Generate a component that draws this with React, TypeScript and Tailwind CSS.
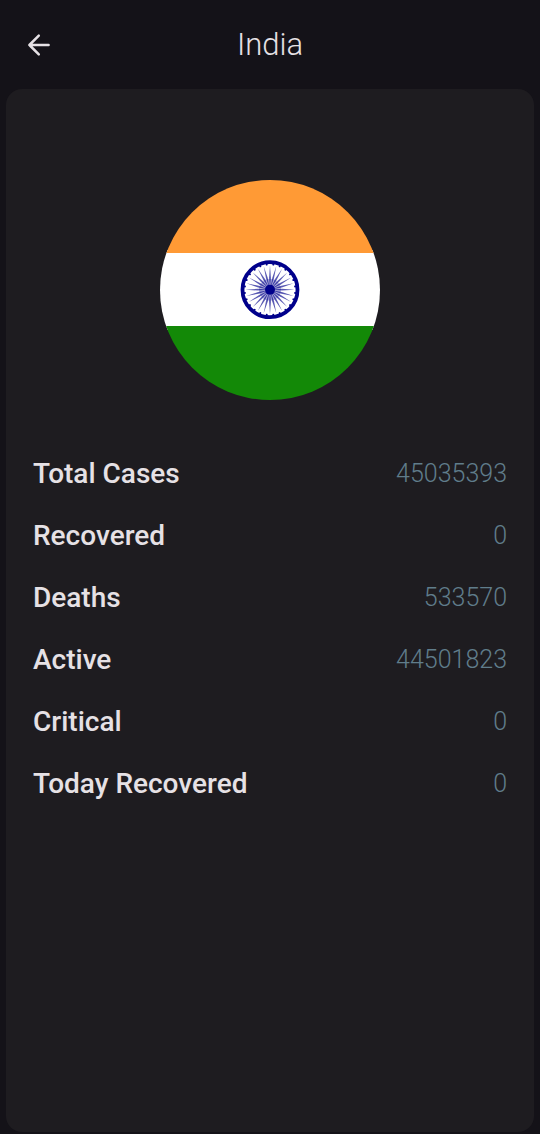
const stats = [
  { label: "Total Cases", value: "45035393" },
  { label: "Recovered", value: "0" },
  { label: "Deaths", value: "533570" },
  { label: "Active", value: "44501823" },
  { label: "Critical", value: "0" },
  { label: "Today Recovered", value: "0" },
];

const spokes = Array.from({ length: 24 }, (_, i) => i * 15);

function BackIcon() {
  return (
    <svg
      viewBox="0 0 24 24"
      className="size-6"
      fill="none"
      stroke="currentColor"
      strokeWidth="2.5"
      strokeLinecap="round"
      strokeLinejoin="round"
      aria-hidden="true"
    >
      <path d="M21.6 12H2.4M11.8 2.6L2.4 12L11.8 21.4" />
    </svg>
  );
}

function IndiaFlag() {
  return (
    <svg viewBox="0 0 220 220" className="size-[220px]" role="img" aria-label="Flag of India">
      <defs>
        <clipPath id="flag-circle">
          <circle cx="110" cy="110" r="110" />
        </clipPath>
      </defs>
      <g clipPath="url(#flag-circle)">
        <rect y="70" width="220" height="80" fill="#ffffff" />
        <rect width="220" height="73" fill="#ff9a35" />
        <rect y="146" width="220" height="74" fill="#138907" />
      </g>
      <g transform="translate(110 109.7)">
        <circle r="27.5" fill="none" stroke="#00008b" strokeWidth="3.8" />
        <circle r="11" fill="#00008b" opacity="0.3" />
        {spokes.map((angle) => (
          <g key={angle} transform={`rotate(${angle})`}>
            <path d="M0 -24.5L-0.9 -12L0 0L0.9 -12Z" fill="#00008b" opacity="0.65" />
            <circle cx="0" cy="-25.3" r="1" fill="#00008b" transform="rotate(7.5)" />
          </g>
        ))}
        <circle r="5" fill="#00008b" />
      </g>
    </svg>
  );
}

export default function App() {
  return (
    <div className="flex min-h-screen flex-col bg-[#141218] font-['Roboto',sans-serif] text-[#e6e1e5]">
      <header className="grid h-[89px] shrink-0 grid-cols-[1fr_auto_1fr] items-center px-[15px]">
        <button
          type="button"
          aria-label="Back"
          className="flex size-12 items-center justify-center rounded-full"
        >
          <BackIcon />
        </button>
        <h1 className="text-[31px] leading-9 font-light">India</h1>
      </header>
      <main className="mx-[6px] mb-[2px] flex flex-1 flex-col items-center rounded-2xl bg-[#1e1c20] px-[27px] pt-[91px]">
        <IndiaFlag />
        <dl className="mt-[43px] w-full">
          {stats.map(({ label, value }) => (
            <div key={label} className="flex h-[62px] items-center justify-between">
              <dt className="text-[28px] leading-8 font-medium">{label}</dt>
              <dd className="text-[25px] leading-8 font-light text-[#607d8b]">{value}</dd>
            </div>
          ))}
        </dl>
      </main>
    </div>
  );
}
